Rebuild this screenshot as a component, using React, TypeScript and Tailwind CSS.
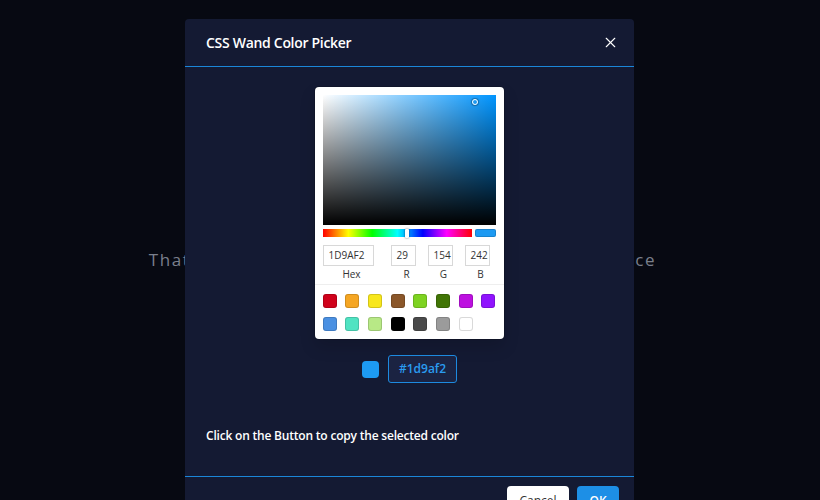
import { X } from "lucide-react";

const swatches = [
  "#D0021B", "#F5A623", "#F8E71C", "#8B572A", "#7ED321", "#417505", "#BD10E0", "#9013FE",
  "#4A90E2", "#50E3C2", "#B8E986", "#000000", "#4A4A4A", "#9B9B9B", "#FFFFFF",
];

function Field({ value, label, width }: { value: string; label: string; width: string }) {
  return (
    <div className={`flex flex-col ${width}`}>
      <div className="h-[21px] w-full border border-[#d8d8d8] pl-[5px] text-[10px] leading-[19px] text-[#333]">
        {value}
      </div>
      <span className="mt-[1px] pl-[7px] text-center text-[10px] leading-[14px] text-[#333]">{label}</span>
    </div>
  );
}

function Picker() {
  return (
    <div className="w-[189px] rounded-[4px] bg-white p-[8px] shadow-[0_0_0_1px_rgba(0,0,0,0.15),0_8px_16px_rgba(0,0,0,0.15)]">
      <div className="relative h-[130px] w-full bg-[#0095ff]">
        <div className="absolute inset-0 bg-gradient-to-r from-white to-transparent" />
        <div className="absolute inset-0 bg-gradient-to-b from-transparent to-black" />
        <div className="absolute left-[149px] top-[4px] h-[6px] w-[6px] rounded-full border-[1.5px] border-white shadow-[0_0_1px_1px_rgba(0,0,0,0.3)]" />
      </div>
      <div className="mt-[4px] flex gap-[3px]">
        <div className="relative h-[8px] flex-1 bg-[linear-gradient(to_right,#f00_0%,#ff0_17%,#0f0_33%,#0ff_50%,#00f_67%,#f0f_83%,#f00_100%)]">
          <div className="absolute left-[82px] top-[-0.5px] h-[9px] w-[4px] rounded-[1px] bg-white shadow-[0_0_2px_rgba(0,0,0,0.6)]" />
        </div>
        <div className="h-[8px] w-[21px] rounded-[2px] bg-[#1d9af2] shadow-[inset_0_0_0_1px_rgba(0,0,0,0.15)]" />
      </div>
      <div className="mt-[8px] flex gap-[12px]">
        <Field value="1D9AF2" label="Hex" width="w-[51px] mr-[5px]" />
        <Field value="29" label="R" width="w-[25px]" />
        <Field value="154" label="G" width="w-[25px]" />
        <Field value="242" label="B" width="w-[25px]" />
      </div>
      <div className="mx-[-8px] mt-[3px] border-t border-[#eee]" />
      <div className="mt-[9px] grid grid-cols-8 gap-x-[8.7px] gap-y-[9px]">
        {swatches.map((c) => (
          <div
            key={c}
            className="h-[14px] w-[14px] rounded-[3px] shadow-[inset_0_0_0_1px_rgba(0,0,0,0.15)]"
            style={{ backgroundColor: c }}
          />
        ))}
      </div>
    </div>
  );
}

export default function App() {
  return (
    <div className="relative h-[500px] w-[820px] overflow-hidden bg-[#070912] font-['Open_Sans',sans-serif]">
      <div className="flex h-full items-center justify-center pr-[15px] pt-[20px]">
        <p className="text-[17px] tracking-[1.6px] text-[#7a7f8c]">
          That is all the color you need for your own workspace
        </p>
      </div>

      <div className="absolute left-[185px] top-[19px] h-[520px] w-[449px] rounded-[4px] bg-[#141a33]">
        <div className="flex h-[48px] items-center justify-between border-b border-[#1b86d8] pl-[21px] pr-[15px]">
          <h2 className="text-[14px] font-semibold tracking-[-0.3px] text-white">CSS Wand Color Picker</h2>
          <X size={17} strokeWidth={1.6} className="text-white" />
        </div>

        <div className="flex h-[410px] flex-col border-b border-[#1b86d8] px-[21px] pt-[20px]">
          <div className="flex justify-center pr-[1px]">
            <Picker />
          </div>
          <div className="mt-[16px] flex items-center justify-center gap-[9px]">
            <div className="h-[17px] w-[17px] rounded-[4px] bg-[#1d9af2]" />
            <div className="flex h-[28px] w-[69px] items-center justify-center rounded-[3px] border border-[#1d8ae0] bg-[#1b2342] text-[12px] font-semibold text-[#2a9cf0]">
              #1d9af2
            </div>
          </div>
          <p className="mt-[44px] text-[12px] font-semibold tracking-[-0.2px] text-white">
            Click on the Button to copy the selected color
          </p>
        </div>

        <div className="flex justify-end gap-[8px] pr-[15px] pt-[9px]">
          <button className="h-[30px] w-[62px] rounded-[4px] bg-white text-[12px] text-[#333]">Cancel</button>
          <button className="h-[30px] w-[42px] rounded-[4px] bg-[#1d8fe6] text-[12px] font-semibold text-white">OK</button>
        </div>
      </div>
    </div>
  );
}
